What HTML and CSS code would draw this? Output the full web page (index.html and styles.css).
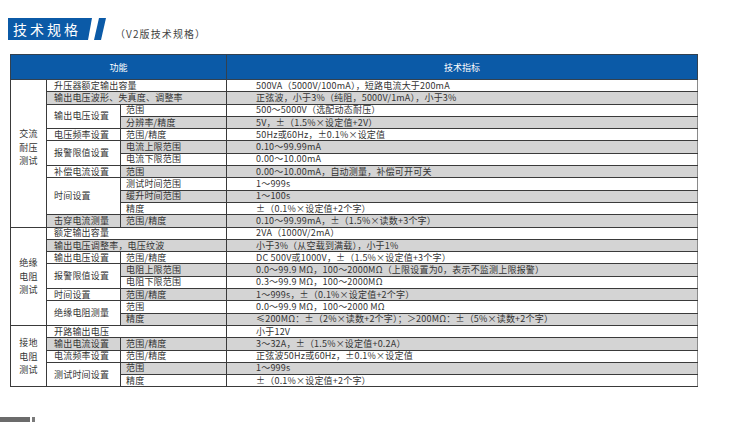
FILE: index.html
```html
<!DOCTYPE html>
<html lang="zh">
<head>
<meta charset="utf-8">
<title>技术规格</title>
<link rel="stylesheet" href="styles.css">
</head>
<body>
<div class="page">
  <div class="title-bar">
    <div class="title">技术规格</div>
    <svg class="slash" width="16" height="22" viewBox="0 0 16 22"><polygon points="9,0 16,0 11,22 4,22" fill="#0b5aa7"/></svg>
    <div class="subtitle">（V2版技术规格）</div>
  </div>
  <table class="spec">
    <colgroup><col class="c1"><col class="c2"><col class="c3"><col class="c4"></colgroup>
    <thead>
      <tr><th colspan="3">功能</th><th>技术指标</th></tr>
    </thead>
    <tbody>
      <tr><td rowspan="12" class="cat cat-up">交流<br>耐压<br>测试</td><td colspan="2" class="l">升压器额定输出容量</td><td class="v">500VA（5000V/100mA），短路电流大于200mA</td></tr>
      <tr class="g"><td colspan="2" class="l">输出电压波形、失真度、调整率</td><td class="v">正弦波，小于3%（纯阻，5000V/1mA），小于3%</td></tr>
      <tr><td rowspan="2" class="l w">输出电压设置</td><td class="s">范围</td><td class="v">500～5000V（选配动态耐压）</td></tr>
      <tr class="g"><td class="s">分辨率/精度</td><td class="v">5V，±（1.5%×设定值+2V）</td></tr>
      <tr><td class="l">电压频率设置</td><td class="s">范围/精度</td><td class="v">50Hz或60Hz，±0.1%×设定值</td></tr>
      <tr class="g"><td rowspan="2" class="l w">报警限值设置</td><td class="s">电流上限范围</td><td class="v">0.10～99.99mA</td></tr>
      <tr><td class="s">电流下限范围</td><td class="v">0.00～10.00mA</td></tr>
      <tr class="g"><td class="l w">补偿电流设置</td><td class="s">范围</td><td class="v">0.00～10.00mA，自动测量，补偿可开可关</td></tr>
      <tr><td rowspan="3" class="l w">时间设置</td><td class="s">测试时间范围</td><td class="v">1～999s</td></tr>
      <tr class="g"><td class="s">缓升时间范围</td><td class="v">1～100s</td></tr>
      <tr><td class="s">精度</td><td class="v">±（0.1%×设定值+2个字）</td></tr>
      <tr class="g"><td class="l">击穿电流测量</td><td class="s">范围/精度</td><td class="v">0.10～99.99mA，±（1.5%×读数+3个字）</td></tr>

      <tr><td rowspan="8" class="cat">绝缘<br>电阻<br>测试</td><td colspan="2" class="l">额定输出容量</td><td class="v">2VA（1000V/2mA）</td></tr>
      <tr class="g"><td colspan="2" class="l">输出电压调整率，电压纹波</td><td class="v">小于3%（从空载到满载），小于1%</td></tr>
      <tr><td class="l">输出电压设置</td><td class="s">范围/精度</td><td class="v">DC 500V或1000V，±（1.5%×设定值+3个字）</td></tr>
      <tr class="g"><td rowspan="2" class="l w">报警限值设置</td><td class="s">电阻上限范围</td><td class="v">0.0～99.9 MΩ，100～2000MΩ（上限设置为0，表示不监测上限报警）</td></tr>
      <tr><td class="s">电阻下限范围</td><td class="v">0.3～99.9 MΩ，100～2000MΩ</td></tr>
      <tr class="g"><td class="l w">时间设置</td><td class="s">范围/精度</td><td class="v">1～999s，±（0.1%×设定值+2个字）</td></tr>
      <tr><td rowspan="2" class="l w">绝缘电阻测量</td><td class="s">范围</td><td class="v">0.0～99.9 MΩ，100～2000 MΩ</td></tr>
      <tr class="g"><td class="s">精度</td><td class="v">≤200MΩ：±（2%×读数+2个字）；＞200MΩ：±（5%×读数+2个字）</td></tr>

      <tr><td rowspan="5" class="cat">接地<br>电阻<br>测试</td><td colspan="2" class="l">开路输出电压</td><td class="v">小于12V</td></tr>
      <tr class="g"><td class="l">输出电流设置</td><td class="s">范围/精度</td><td class="v">3～32A，±（1.5%×设定值+0.2A）</td></tr>
      <tr><td class="l">电流频率设置</td><td class="s">范围/精度</td><td class="v">正弦波50Hz或60Hz，±0.1%×设定值</td></tr>
      <tr class="g"><td rowspan="2" class="l w">测试时间设置</td><td class="s">范围</td><td class="v">1～999s</td></tr>
      <tr><td class="s">精度</td><td class="v">±（0.1%×设定值+2个字）</td></tr>
    </tbody>
  </table>
  <div class="footer-mark"><span class="mark-a"></span><span class="mark-b"></span></div>
</div>
</body>
</html>
```
FILE: styles.css
```css
html, body {
  margin: 0;
  padding: 0;
  background: #ffffff;
}
body {
  width: 750px;
  height: 422px;
  overflow: hidden;
  font-family: "Noto Sans CJK SC", "Noto Sans", sans-serif;
  color: #333333;
}
.page {
  display: flex;
  flex-direction: column;
  align-items: flex-start;
}
.title-bar {
  display: flex;
  align-items: center;
  height: 22px;
  margin: 18px 0 0 8px;
}
.title {
  box-sizing: border-box;
  width: 84px;
  height: 22px;
  padding-left: 5px;
  background: #0b5aa7;
  color: #ffffff;
  font-size: 14px;
  line-height: 22px;
  letter-spacing: 3px;
  clip-path: polygon(0 0, 100% 0, calc(100% - 4px) 100%, 0 100%);
}
.slash {
  display: block;
  margin-left: -2px;
}
.subtitle {
  margin-left: 9px;
  padding-top: 9px;
  font-size: 10px;
  letter-spacing: 1.1px;
  color: #444444;
  line-height: 12px;
}
.spec {
  margin: 14px 0 0 10px;
  width: 687px;
  border-collapse: collapse;
  table-layout: fixed;
  font-size: 9px;
}
.c1 { width: 36px; }
.c2 { width: 74px; }
.c3 { width: 106px; }
.c4 { width: 471px; }
.spec th {
  height: 24px;
  padding: 0;
  background: #0b5aa7;
  color: #ffffff;
  font-weight: normal;
  font-size: 9px;
  border: 1px solid #33414f;
}
.spec thead th + th {
  border-left-color: #8a9fb8;
}
.spec tbody tr {
  height: 12.3px;
}
.spec td {
  padding: 0;
  border: 1px solid #3a3a3a;
  line-height: 10px;
  white-space: nowrap;
  overflow: hidden;
  letter-spacing: 0.2px;
  vertical-align: middle;
}
.spec tr.g td {
  background: #d4d4d4;
}
.spec tr.g td.w,
.spec tr td.cat {
  background: #ffffff;
}
.spec td.cat {
  text-align: center;
  line-height: 13.2px;
  font-size: 9px;
}
.spec td.cat-up {
  padding-bottom: 12px;
}
.spec td.l {
  padding-left: 7px;
}
.spec td.s {
  padding-left: 5px;
}
.spec td.v {
  padding-left: 29px;
}
.spec td:last-child {
  border-right-color: #8a8a8a;
}
.footer-mark {
  display: flex;
  gap: 2px;
  margin-top: 30px;
}
.mark-a {
  display: block;
  width: 30px;
  height: 6px;
  background: #6b6b6b;
}
.mark-b {
  display: block;
  width: 3px;
  height: 6px;
  background: #7a7a7a;
}
```
